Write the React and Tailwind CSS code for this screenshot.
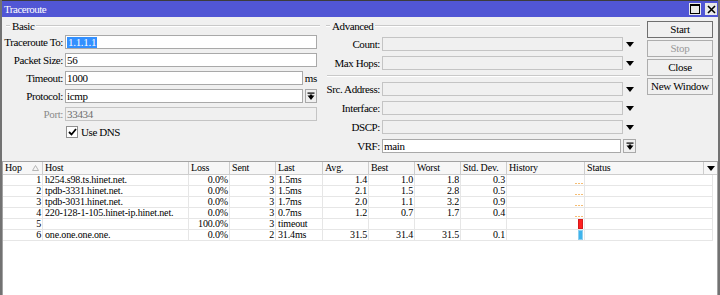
import React from "react";

const F = "font-[family-name:'Liberation_Serif','Times_New_Roman',serif]";

function Legend({ text, dashMl }) {
  return (
    <div className="h-[12px] flex items-center">
      <div className={`h-0 border-t border-[#c9c9c9] border-b-white border-b ${dashMl} w-[4px]`} />
      <span className="px-[2px] text-[11px] leading-none tracking-[-0.4px] text-black">{text}</span>
      <div className={`h-0 border-t border-[#c9c9c9] border-b border-b-white flex-1`} />
    </div>
  );
}

function DownTri() {
  return (
    <svg width="8" height="5" viewBox="0 0 8 5">
      <polygon points="0,0 8,0 4,5" fill="#000" />
    </svg>
  );
}

function BarArrow() {
  return (
    <svg width="8" height="9" viewBox="0 0 8 9">
      <rect x="0.5" y="0.5" width="7" height="1.2" fill="#000" />
      <polygon points="0.5,3.5 7.5,3.5 4,8" fill="#000" />
      <rect x="2.8" y="2.5" width="2.4" height="2" fill="#000" />
    </svg>
  );
}

function LRow({ label, children, gray }) {
  return (
    <div className="flex items-center h-[14px]">
      <div
        className={`w-[61px] text-right text-[11px] leading-none tracking-[-0.4px] ${
          gray ? "text-[#8a8a8a]" : "text-black"
        }`}
      >
        {label}
      </div>
      <div className="ml-[2px] w-[252px] h-[14px] flex items-center">{children}</div>
    </div>
  );
}

function Input({ w, value, disabled, children }) {
  return (
    <div
      className={`${w} h-[14px] border flex items-center px-[1px] text-[11px] leading-none tracking-[-0.3px] ${
        disabled
          ? "bg-[#f0f0f0] border-[#c4c4c4] text-[#6d6d6d]"
          : "bg-white border-[#a9a9a9] text-black"
      }`}
    >
      {children ?? value}
    </div>
  );
}

function ARow({ label, children }) {
  return (
    <div className="flex items-center h-[14px]">
      <div className="w-[60px] text-right text-[11px] leading-none tracking-[-0.4px] text-black">
        {label}
      </div>
      <div className="ml-[2px] flex items-center">{children}</div>
    </div>
  );
}

function ACombo({ label }) {
  return (
    <ARow label={label}>
      <div className="w-[241px] h-[14px] border border-[#c4c4c4] bg-[#f0f0f0]" />
      <div className="w-[14px] flex justify-center items-center">
        <DownTri />
      </div>
    </ARow>
  );
}

function Btn({ children, disabled, def }) {
  return (
    <div
      className={`w-[66px] h-[17px] flex items-center justify-center bg-[#f0f0f0] border text-[11px] leading-none tracking-[-0.3px] ${
        def ? "border-[#6f6f6f]" : "border-[#adadad]"
      } ${disabled ? "text-[#9a9a9a]" : "text-black"}`}
    >
      {children}
    </div>
  );
}

const COLS = [
  { k: "hop", t: "Hop", w: "w-[40px]", a: "text-right" },
  { k: "host", t: "Host", w: "w-[146px]", a: "text-left" },
  { k: "loss", t: "Loss", w: "w-[41px]", a: "text-right" },
  { k: "sent", t: "Sent", w: "w-[46px]", a: "text-right" },
  { k: "last", t: "Last", w: "w-[47px]", a: "text-left" },
  { k: "avg", t: "Avg.", w: "w-[46px]", a: "text-right" },
  { k: "best", t: "Best", w: "w-[46px]", a: "text-right" },
  { k: "worst", t: "Worst", w: "w-[46px]", a: "text-right" },
  { k: "std", t: "Std. Dev.", w: "w-[46px]", a: "text-right" },
];

const ROWS = [
  { hop: "1", host: "h254.s98.ts.hinet.net.", loss: "0.0%", sent: "3", last: "1.5ms", avg: "1.4", best: "1.0", worst: "1.8", std: "0.3", h: "dots" },
  { hop: "2", host: "tpdb-3331.hinet.net.", loss: "0.0%", sent: "3", last: "1.5ms", avg: "2.1", best: "1.5", worst: "2.8", std: "0.5", h: "dots" },
  { hop: "3", host: "tpdb-3031.hinet.net.", loss: "0.0%", sent: "3", last: "1.7ms", avg: "2.0", best: "1.1", worst: "3.2", std: "0.9", h: "dots" },
  { hop: "4", host: "220-128-1-105.hinet-ip.hinet.net.", loss: "0.0%", sent: "3", last: "0.7ms", avg: "1.2", best: "0.7", worst: "1.7", std: "0.4", h: "dots" },
  { hop: "5", host: "", loss: "100.0%", sent: "3", last: "timeout", avg: "", best: "", worst: "", std: "", h: "red" },
  { hop: "6", host: "one.one.one.one.", loss: "0.0%", sent: "2", last: "31.4ms", avg: "31.5", best: "31.4", worst: "31.5", std: "0.1", h: "blue" },
];

function History({ kind }) {
  if (kind === "dots")
    return (
      <div className="flex gap-[1px] mb-[1px]">
        <div className="w-[2px] h-[1px] bg-[#f6bd72]" />
        <div className="w-[2px] h-[1px] bg-[#f6bd72]" />
        <div className="w-[2px] h-[1px] bg-[#f6bd72]" />
      </div>
    );
  if (kind === "red")
    return <div className="w-[5px] h-[10px] bg-[#ff1f1f] border border-[#d41a1a]" />;
  return <div className="w-[5px] h-[10px] bg-[#3fb4ec] border border-[#8ccff0]" />;
}

export default function App() {
  return (
    <div
      className={`${F} w-[720px] h-[295px] overflow-hidden bg-[#f0f0f0] border-l-2 border-r-2 border-[#727272] flex flex-col`}
    >
      {/* Title bar */}
      <div className="h-[17px] shrink-0 border-t border-[#3c3c3c] bg-[#5156d5] flex items-center pl-[2px] pr-[1px]">
        <span className="text-white text-[11px] leading-none tracking-[-0.5px]">Traceroute</span>
        <div className="ml-auto flex items-center gap-[4px]">
          <div className="w-[12px] h-[12px] bg-[#e9e9e9] flex items-center justify-center">
            <svg width="10" height="10" viewBox="0 0 10 10">
              <rect x="0.5" y="0.5" width="9" height="9" fill="none" stroke="#000" strokeWidth="1" />
              <rect x="0.5" y="0.5" width="9" height="1.5" fill="#000" />
            </svg>
          </div>
          <div className="w-[12px] h-[12px] bg-[#e9e9e9] flex items-center justify-center">
            <svg width="9" height="9" viewBox="0 0 9 9">
              <path d="M1 1 L8 8 M8 1 L1 8" stroke="#000" strokeWidth="1.6" />
            </svg>
          </div>
        </div>
      </div>

      {/* Top section */}
      <div className="h-[144px] shrink-0 flex">
        {/* Basic */}
        <div className="w-[318px] pt-[3px]">
          <Legend text="Basic" dashMl="ml-[4px]" />
          <div className="mt-[3px] flex flex-col gap-[4px]">
            <LRow label="Traceroute To:">
              <Input w="w-[252px]">
                <span className="bg-[#3390ff] text-white px-[1px]">1.1.1.1</span>
              </Input>
            </LRow>
            <LRow label="Packet Size:">
              <Input w="w-[252px]" value="56" />
            </LRow>
            <LRow label="Timeout:">
              <Input w="w-[238px]" value="1000" />
              <span className="ml-[2px] text-[11px] leading-none tracking-[-0.3px]">ms</span>
            </LRow>
            <LRow label="Protocol:">
              <Input w="w-[238px]" value="icmp" />
              <div className="ml-[2px] w-[12px] h-[14px] border border-[#a9a9a9] bg-[#f0f0f0] flex items-center justify-center">
                <BarArrow />
              </div>
            </LRow>
            <LRow label="Port:" gray>
              <Input w="w-[252px]" value="33434" disabled />
            </LRow>
            <div className="flex items-center h-[14px] pl-[64px]">
              <div className="w-[12px] h-[12px] bg-white border border-[#8f8f8f] flex items-center justify-center">
                <svg width="9" height="8" viewBox="0 0 9 8">
                  <path d="M1 4 L3.5 6.5 L8 1" fill="none" stroke="#000" strokeWidth="1.8" />
                </svg>
              </div>
              <span className="ml-[3px] text-[11px] leading-none tracking-[-0.4px]">Use DNS</span>
            </div>
          </div>
        </div>

        {/* Advanced */}
        <div className="w-[320px] pt-[3px]">
          <Legend text="Advanced" dashMl="ml-[6px]" />
          <div className="mt-[5px] flex flex-col gap-[5px]">
            <ACombo label="Count:" />
            <ACombo label="Max Hops:" />
          </div>
          <div className="ml-[7px] mt-[5px] mb-[5px] h-0 border-t border-[#c9c9c9] border-b border-b-white" />
          <div className="flex flex-col gap-[5px]">
            <ACombo label="Src. Address:" />
            <ACombo label="Interface:" />
            <ACombo label="DSCP:" />
            <ARow label="VRF:">
              <Input w="w-[239px]" value="main" />
              <div className="ml-[2px] w-[13px] h-[14px] border border-[#a9a9a9] bg-[#f0f0f0] flex items-center justify-center">
                <BarArrow />
              </div>
            </ARow>
          </div>
        </div>

        {/* Buttons */}
        <div className="pl-[7px] pt-[4px] flex flex-col gap-[2px]">
          <Btn def>Start</Btn>
          <Btn disabled>Stop</Btn>
          <Btn>Close</Btn>
          <Btn>New Window</Btn>
        </div>
      </div>

      {/* Table */}
      <div className="flex-1 bg-white border-t border-l border-r border-[#a3a3a3] text-[10px] tracking-[-0.15px] text-black">
        <div className="h-[13px] flex bg-[#f7f7f7] border-b border-[#cdcdcd]">
          {COLS.map((c) => (
            <div
              key={c.k}
              className={`${c.w} shrink-0 h-full border-r border-[#cdcdcd] pl-[2px] flex items-center leading-none relative`}
            >
              {c.t}
              {c.k === "hop" && (
                <svg className="absolute right-[3px] top-[3px]" width="7" height="6" viewBox="0 0 7 6">
                  <polygon points="3.5,0.5 6.5,5.5 0.5,5.5" fill="none" stroke="#b5b5b5" strokeWidth="1" />
                </svg>
              )}
            </div>
          ))}
          <div className="w-[78px] shrink-0 h-full border-r border-[#cdcdcd] pl-[2px] flex items-center leading-none">
            History
          </div>
          <div className="w-[119px] shrink-0 h-full border-r border-[#cdcdcd] pl-[2px] flex items-center leading-none">
            Status
          </div>
          <div className="flex-1 h-full flex items-center justify-center">
            <DownTri />
          </div>
        </div>
        {ROWS.map((r, i) => (
          <div key={i} className="h-[11px] flex">
            {COLS.map((c) => (
              <div
                key={c.k}
                className={`${c.w} shrink-0 h-full border-r border-b border-[#e6e6e6] ${
                  c.a === "text-right" ? "pr-[1px] justify-end" : "pl-[2px] justify-start"
                } flex items-center leading-none whitespace-nowrap overflow-hidden`}
              >
                {r[c.k]}
              </div>
            ))}
            <div className="w-[78px] shrink-0 h-full border-r border-b border-[#e6e6e6] flex justify-end items-end pr-[1px]">
              <History kind={r.h} />
            </div>
            <div className="w-[128px] shrink-0 h-full border-r border-b border-[#e6e6e6]" />
          </div>
        ))}
      </div>
    </div>
  );
}
